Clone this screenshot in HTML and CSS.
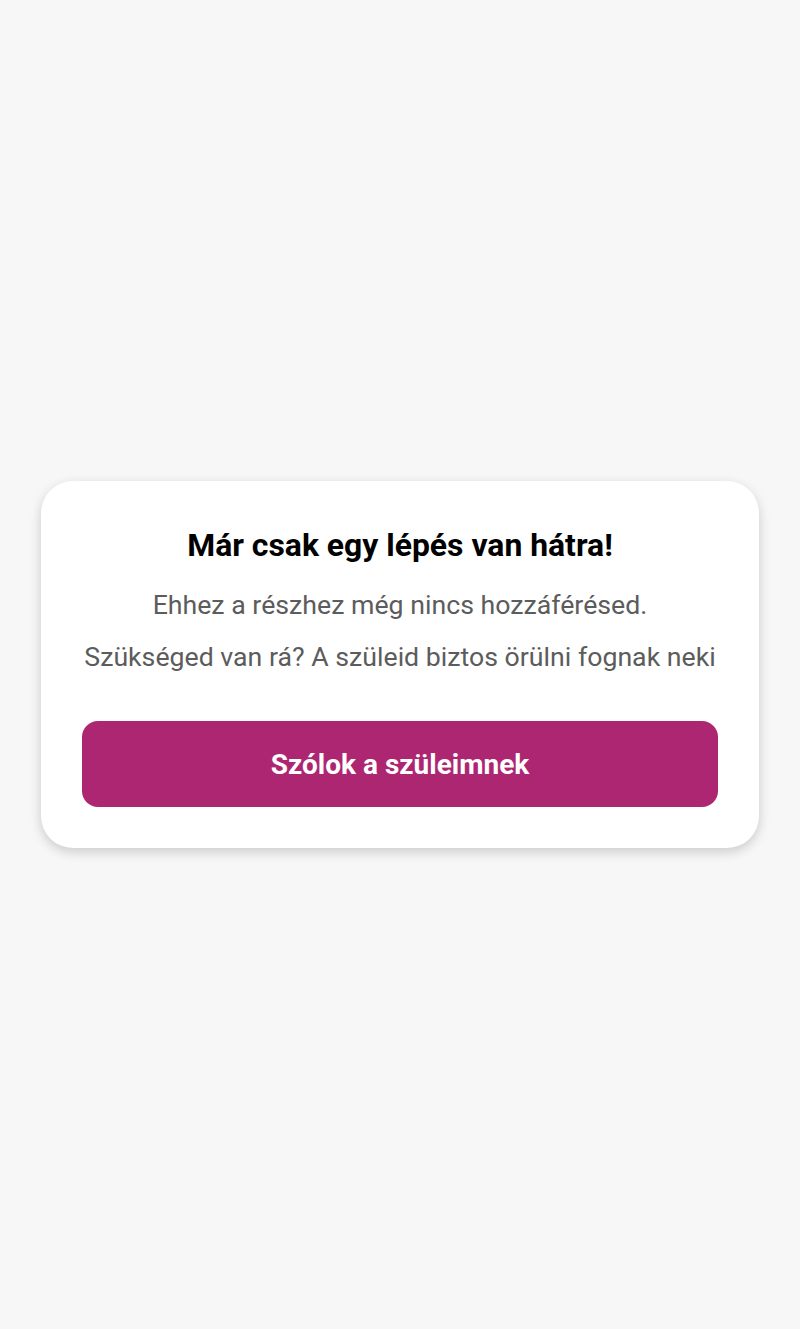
FILE: index.html
```html
<!DOCTYPE html>
<html lang="hu">
<head>
<meta charset="utf-8">
<link rel="stylesheet" href="styles.css">
</head>
<body>
<div class="page">
  <div class="card">
    <h1 class="title">Már csak egy lépés van hátra!</h1>
    <p class="text">Ehhez a részhez még nincs hozzáférésed.</p>
    <p class="text">Szükséged van rá? A szüleid biztos örülni fognak neki</p>
    <button class="btn">Szólok a szüleimnek</button>
  </div>
</div>
</body>
</html>
```
FILE: styles.css
```css
html, body {
  margin: 0;
  padding: 0;
}
body {
  background: #f7f7f7;
  font-family: Roboto, "Liberation Sans", sans-serif;
}
.page {
  height: 1329px;
  display: flex;
  align-items: center;
  justify-content: center;
  padding: 0 41px;
  box-sizing: border-box;
}
.card {
  width: 100%;
  box-sizing: border-box;
  background: #ffffff;
  border-radius: 32px;
  box-shadow: 0 4px 12px rgba(0,0,0,0.18);
  padding: 41px;
  display: flex;
  flex-direction: column;
  align-items: center;
}
.title {
  margin: 0 0 11px;
  font-size: 31.9px;
  line-height: 46px;
  font-weight: 700;
  color: #000;
  text-align: center;
}
.text {
  margin: 0;
  font-size: 26.7px;
  line-height: 52px;
  color: #5c5c5c;
  text-align: center;
  white-space: nowrap;
}
.btn {
  margin-top: 38px;
  width: 100%;
  height: 86px;
  border: none;
  border-radius: 16px;
  background: #ad2672;
  color: #fff;
  font-family: Roboto, "Liberation Sans", sans-serif;
  font-size: 28px;
  font-weight: 700;
}
```
